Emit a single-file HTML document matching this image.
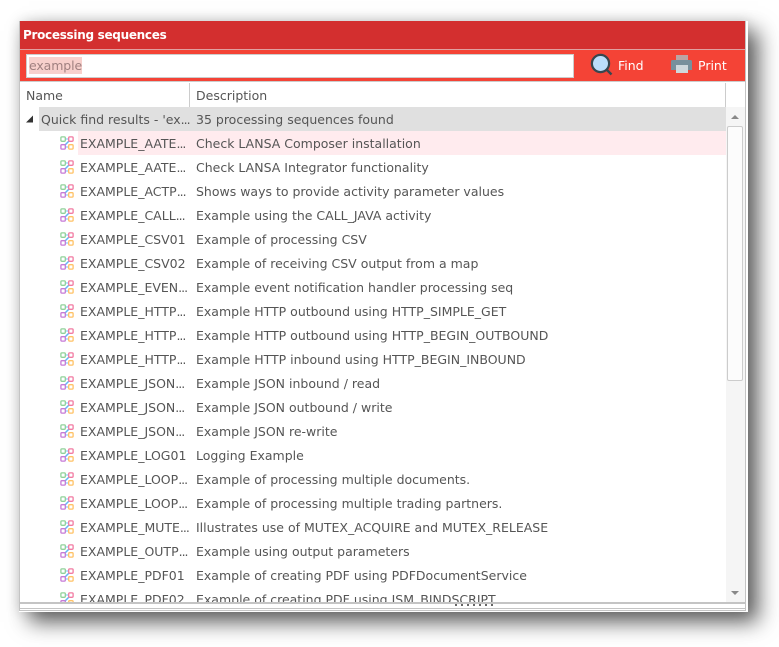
<!DOCTYPE html>
<html><head><meta charset="utf-8">
<style>
html,body{margin:0;padding:0;background:#fff;width:779px;height:647px;overflow:hidden}
*{box-sizing:border-box}
body{font-family:"DejaVu Sans",sans-serif;font-size:12.5px;color:#555;position:relative}
div{position:absolute}
.r{left:0;width:708px;height:24px;line-height:26px;white-space:nowrap}
.n{position:absolute;left:60px;top:0}
.n i{font-style:normal;letter-spacing:-1px}
.d{position:absolute;left:176px;top:0}
.r svg{position:absolute;left:40px;top:5px}
</style></head><body>
<svg width="0" height="0" style="position:absolute"><defs>
<g id="i" fill="#fff" stroke-width="1.3">
<path d="M4.500 9.500L9.500 4.500" stroke="#64b5f6" stroke-width="1.500" fill="none"/><path d="M5 3h4M5 11h4" stroke="#90caf9" fill="none"/>
<rect x=".9" y=".9" width="4.400" height="4.400" rx="1" stroke="#8fd19a"/>
<rect x="8.700" y=".9" width="4.400" height="4.400" rx="1" stroke="#f27aa2"/>
<rect x=".9" y="8.700" width="4.400" height="4.400" rx="1" stroke="#c67ad6"/>
<rect x="8.700" y="8.700" width="4.400" height="4.400" rx="1" stroke="#ffc266"/>
</g></defs></svg>
<div style="left:19px;top:21px;width:729px;height:591px;background:#fff;box-shadow:10px 10px 20px 0 #5c5c5c,0 0 12px rgba(0,0,0,.12)"></div>
<div style="left:19px;top:21px;width:727px;height:590px;background:#fff;border:1px solid #c4c4c4;border-top:0;overflow:hidden">
<div style="left:0;top:0;width:725px;height:29px;background:#d32f2f;color:#fff;font-weight:bold;font-size:12px;letter-spacing:-.3px;line-height:28px;padding-left:3px;border-bottom:1px solid #e0a0a0">Processing sequences</div>
<div style="left:0;top:29px;width:726px;height:32px;background:#f44336;border-bottom:1px solid #ccc">
<div style="left:6px;top:4px;width:548px;height:24px;background:#fff;border:1px solid #ccc"></div>
<div style="left:9px;top:7px;height:17px;line-height:17px;background:#f8d0cc;color:#a08080;letter-spacing:-.1px">example</div>
<svg style="position:absolute;left:570px;top:3px" width="24" height="24" viewBox="0 0 24 24"><circle cx="10.500" cy="10.500" r="8.600" fill="#bbdefb" stroke="#37474f" stroke-width="2.200"/><path d="M17 17l4.500 4.500" stroke="#37474f" stroke-width="2.400"/></svg>
<div style="left:598px;top:7px;color:#fff;line-height:18px">Find</div>
<svg style="position:absolute;left:651px;top:5px" width="22" height="20" viewBox="0 0 22 20"><rect x="5" y="0" width="12" height="5" fill="#bca4a4"/><path d="M0 6.500q0-1.500 1.500-1.500h18q1.500 0 1.500 1.500V15H0z" fill="#78909c"/><rect x="5" y="10" width="12" height="8" fill="#cfd8dc"/></svg>
<div style="left:678px;top:7px;color:#fff;line-height:18px">Print</div>
</div>
<div style="left:0;top:62px;width:726px;height:24px;background:#fff;line-height:25px;color:#555">
<div style="left:6px;top:0">Name</div><div style="left:176px;top:0">Description</div>
<div style="left:169px;top:0;width:1px;height:24px;background:#ccc"></div>
<div style="left:705px;top:0;width:1px;height:24px;background:#ccc"></div>
</div>
<div style="left:0;top:86px;width:725px;height:495px;overflow:hidden;background:#fff">
<div style="left:19px;top:0;width:687px;height:24px;background:#e0e0e0"></div>
<div style="left:58px;top:24px;width:648px;height:24px;background:#ffebee"></div>
<svg style="position:absolute;left:6px;top:8px" width="8" height="8"><path d="M7 0.500V7.500H0z" fill="#333"/></svg>
<div class="r" style="top:0"><span class="n" style="left:21px">Quick find results - 'ex<i>...</i></span><span class="d">35 processing sequences found</span></div>
<div class="r" style="top:24px"><svg width="16" height="16"><use href="#i"/></svg><span class="n">EXAMPLE_AATE<i>...</i></span><span class="d">Check LANSA Composer installation</span></div>
<div class="r" style="top:48px"><svg width="16" height="16"><use href="#i"/></svg><span class="n">EXAMPLE_AATE<i>...</i></span><span class="d">Check LANSA Integrator functionality</span></div>
<div class="r" style="top:72px"><svg width="16" height="16"><use href="#i"/></svg><span class="n">EXAMPLE_ACTP<i>...</i></span><span class="d">Shows ways to provide activity parameter values</span></div>
<div class="r" style="top:96px"><svg width="16" height="16"><use href="#i"/></svg><span class="n">EXAMPLE_CALL<i>...</i></span><span class="d">Example using the CALL_JAVA activity</span></div>
<div class="r" style="top:120px"><svg width="16" height="16"><use href="#i"/></svg><span class="n">EXAMPLE_CSV01</span><span class="d">Example of processing CSV</span></div>
<div class="r" style="top:144px"><svg width="16" height="16"><use href="#i"/></svg><span class="n">EXAMPLE_CSV02</span><span class="d">Example of receiving CSV output from a map</span></div>
<div class="r" style="top:168px"><svg width="16" height="16"><use href="#i"/></svg><span class="n">EXAMPLE_EVEN<i>...</i></span><span class="d">Example event notification handler processing seq</span></div>
<div class="r" style="top:192px"><svg width="16" height="16"><use href="#i"/></svg><span class="n">EXAMPLE_HTTP<i>...</i></span><span class="d">Example HTTP outbound using HTTP_SIMPLE_GET</span></div>
<div class="r" style="top:216px"><svg width="16" height="16"><use href="#i"/></svg><span class="n">EXAMPLE_HTTP<i>...</i></span><span class="d">Example HTTP outbound using HTTP_BEGIN_OUTBOUND</span></div>
<div class="r" style="top:240px"><svg width="16" height="16"><use href="#i"/></svg><span class="n">EXAMPLE_HTTP<i>...</i></span><span class="d">Example HTTP inbound using HTTP_BEGIN_INBOUND</span></div>
<div class="r" style="top:264px"><svg width="16" height="16"><use href="#i"/></svg><span class="n">EXAMPLE_JSON<i>...</i></span><span class="d">Example JSON inbound / read</span></div>
<div class="r" style="top:288px"><svg width="16" height="16"><use href="#i"/></svg><span class="n">EXAMPLE_JSON<i>...</i></span><span class="d">Example JSON outbound / write</span></div>
<div class="r" style="top:312px"><svg width="16" height="16"><use href="#i"/></svg><span class="n">EXAMPLE_JSON<i>...</i></span><span class="d">Example JSON re-write</span></div>
<div class="r" style="top:336px"><svg width="16" height="16"><use href="#i"/></svg><span class="n">EXAMPLE_LOG01</span><span class="d">Logging Example</span></div>
<div class="r" style="top:360px"><svg width="16" height="16"><use href="#i"/></svg><span class="n">EXAMPLE_LOOP<i>...</i></span><span class="d">Example of processing multiple documents.</span></div>
<div class="r" style="top:384px"><svg width="16" height="16"><use href="#i"/></svg><span class="n">EXAMPLE_LOOP<i>...</i></span><span class="d">Example of processing multiple trading partners.</span></div>
<div class="r" style="top:408px"><svg width="16" height="16"><use href="#i"/></svg><span class="n">EXAMPLE_MUTE<i>...</i></span><span class="d">Illustrates use of MUTEX_ACQUIRE and MUTEX_RELEASE</span></div>
<div class="r" style="top:432px"><svg width="16" height="16"><use href="#i"/></svg><span class="n">EXAMPLE_OUTP<i>...</i></span><span class="d">Example using output parameters</span></div>
<div class="r" style="top:456px"><svg width="16" height="16"><use href="#i"/></svg><span class="n">EXAMPLE_PDF01</span><span class="d">Example of creating PDF using PDFDocumentService</span></div>
<div class="r" style="top:480px"><svg width="16" height="16"><use href="#i"/></svg><span class="n">EXAMPLE_PDF02</span><span class="d">Example of creating PDF using JSM_BINDSCRIPT</span></div>
<div style="left:706px;top:0;width:19px;height:495px;background:#f5f5f5"></div>
<div style="left:707px;top:19px;width:16px;height:255px;background:#fcfcfc;border:1px solid #ccc;border-radius:2px"></div>
<svg style="position:absolute;left:710px;top:7px" width="10" height="6"><path d="M5 1l4 4H1z" fill="#888"/></svg>
<svg style="position:absolute;left:710px;top:483px" width="10" height="6"><path d="M1 1h8L5 5z" fill="#888"/></svg>
</div>
<div style="left:0;top:581px;width:725px;height:2px;background:#c4c4c4"></div>
<div style="left:0;top:587px;width:725px;height:1px;background:#c4c4c4"></div>
<div style="left:435px;top:583px;width:42px;height:2px;background:repeating-linear-gradient(90deg,#666 0 2px,transparent 2px 6px)"></div>
</div>
</body></html>
